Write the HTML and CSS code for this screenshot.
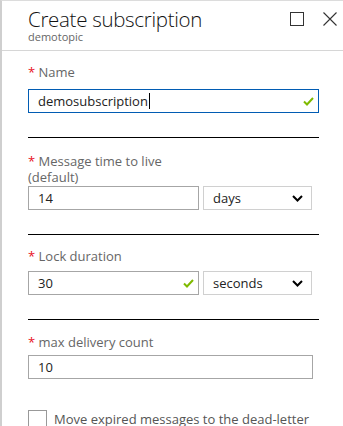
FILE: index.html
```html
<!DOCTYPE html>
<html>

<head>
	<link rel="stylesheet" href="styles.css">
</head>

<body>
	<div class="blade">
		<div class="blade-header">
			<div class="titles">
				<h1>Create subscription</h1>
				<div class="subtitle">demotopic</div>
			</div>
			<div class="controls">
				<svg class="ctl" width="14" height="14" viewBox="0 0 14 14">
					<rect x="0.5" y="0.5" width="13" height="13" fill="none" stroke="#333" stroke-width="1" />
				</svg>
				<svg class="ctl" width="14" height="14" viewBox="0 0 14 14">
					<path d="M0.5 0.5 L13.5 13.5 M13.5 0.5 L0.5 13.5" stroke="#333" stroke-width="1.1" fill="none" />
				</svg>
			</div>
		</div>

		<form class="blade-content">
			<div class="field field-name">
				<label class="field-label"><span class="req">*</span> Name</label>
				<div class="input-box focused">
					<span class="value">demosubscription</span><span class="caret"></span>
					<svg class="valid" width="11" height="9" viewBox="0 0 11 9">
						<path d="M1 4.5 L4 7.5 L10 1" stroke="#7fba00" stroke-width="2" fill="none" />
					</svg>
				</div>
			</div>
			<div class="divider"></div>

			<div class="field field-ttl">
				<label class="field-label"><span class="req">*</span> Message time to live<br>(default)</label>
				<div class="row">
					<div class="input-box half"><span class="value">14</span></div>
					<div class="select-box">
						<span class="value">days</span>
						<svg class="chevron" width="11" height="7" viewBox="0 0 11 7">
							<path d="M1 1 L5.5 5.5 L10 1" stroke="#000" stroke-width="2" fill="none" />
						</svg>
					</div>
				</div>
			</div>
			<div class="divider"></div>

			<div class="field field-lock">
				<label class="field-label"><span class="req">*</span> Lock duration</label>
				<div class="row">
					<div class="input-box half">
						<span class="value">30</span>
						<svg class="valid" width="11" height="9" viewBox="0 0 11 9">
							<path d="M1 4.5 L4 7.5 L10 1" stroke="#7fba00" stroke-width="2" fill="none" />
						</svg>
					</div>
					<div class="select-box">
						<span class="value">seconds</span>
						<svg class="chevron" width="11" height="7" viewBox="0 0 11 7">
							<path d="M1 1 L5.5 5.5 L10 1" stroke="#000" stroke-width="2" fill="none" />
						</svg>
					</div>
				</div>
			</div>
			<div class="divider"></div>

			<div class="field field-count">
				<label class="field-label"><span class="req">*</span> max delivery count</label>
				<div class="input-box count"><span class="value">10</span></div>
			</div>

			<div class="check-row">
				<span class="checkbox"></span>
				<span class="check-label">Move expired messages to the dead-letter</span>
			</div>
		</form>
	</div>
</body>

</html>
```

FILE: styles.css
```css
* {
	box-sizing: border-box;
	margin: 0;
	padding: 0;
	font-family: 'Segoe UI', 'Open Sans', 'Noto Sans', sans-serif;
}

body {
	background: white;
	overflow: hidden;
}

.blade {
	height: 100vh;
	border-top: 1px solid #dcdcdc;
	border-left: 2px solid #cfcfcf;
}

.blade-header {
	display: flex;
	justify-content: space-between;
	height: 50px;
	border-bottom: 1px solid #d6d6d6;
	padding: 6px 0 0 26px;
}

h1 {
	font-size: 20.5px;
	font-weight: 300;
	color: #111;
	line-height: 24px;
	letter-spacing: -0.3px;
}

.subtitle {
	font-size: 11px;
	color: #666;
	line-height: 12px;
}

.controls {
	display: flex;
	gap: 19px;
	padding: 5px 6px 0 0;
}

.blade-content {
	padding: 13px 0 0 26px;
	width: 317px;
}

.field-label {
	display: block;
	font-size: 13px;
	line-height: 16px;
	color: #666;
}

.field-name .field-label {
	margin-bottom: 9px;
}

.field-ttl {
	margin-top: 15px;
}

.field-ttl .field-label {
	margin-bottom: 1px;
}

.field-lock {
	margin-top: 13px;
}

.field-lock .field-label {
	margin-bottom: 7px;
}

.field-count {
	margin-top: 14px;
}

.field-count .field-label {
	margin-bottom: 5px;
}

.req {
	color: #e81123;
}

.input-box {
	height: 24px;
	border: 1px solid #a6a6a6;
	display: flex;
	align-items: center;
	padding: 0 9px;
	font-size: 13px;
	color: #222;
}

.input-box.focused {
	border-color: #015cb3;
}

.input-box .value {
	flex: none;
}

.caret {
	width: 1px;
	height: 16px;
	background: #000;
	margin-left: 1px;
}

.valid {
	margin-left: auto;
	margin-right: -5px;
}

.half {
	width: 171px;
	flex: none;
}

.count {
	width: 285px;
}

.row {
	display: flex;
	gap: 4px;
}

.select-box {
	width: 109px;
	height: 24px;
	border: 1px solid #d0d0d0;
	display: flex;
	align-items: center;
	justify-content: space-between;
	padding: 0 8px 0 9px;
	font-size: 13px;
	color: #222;
}

.divider {
	height: 1px;
	background: #000;
	margin-top: 24px;
}

.check-row {
	display: flex;
	align-items: flex-start;
	gap: 7px;
	margin-top: 31px;
}

.checkbox {
	width: 19px;
	height: 19px;
	border: 1px solid #999;
	flex: none;
}

.check-label {
	font-size: 13px;
	color: #555;
	line-height: 18px;
}
```
